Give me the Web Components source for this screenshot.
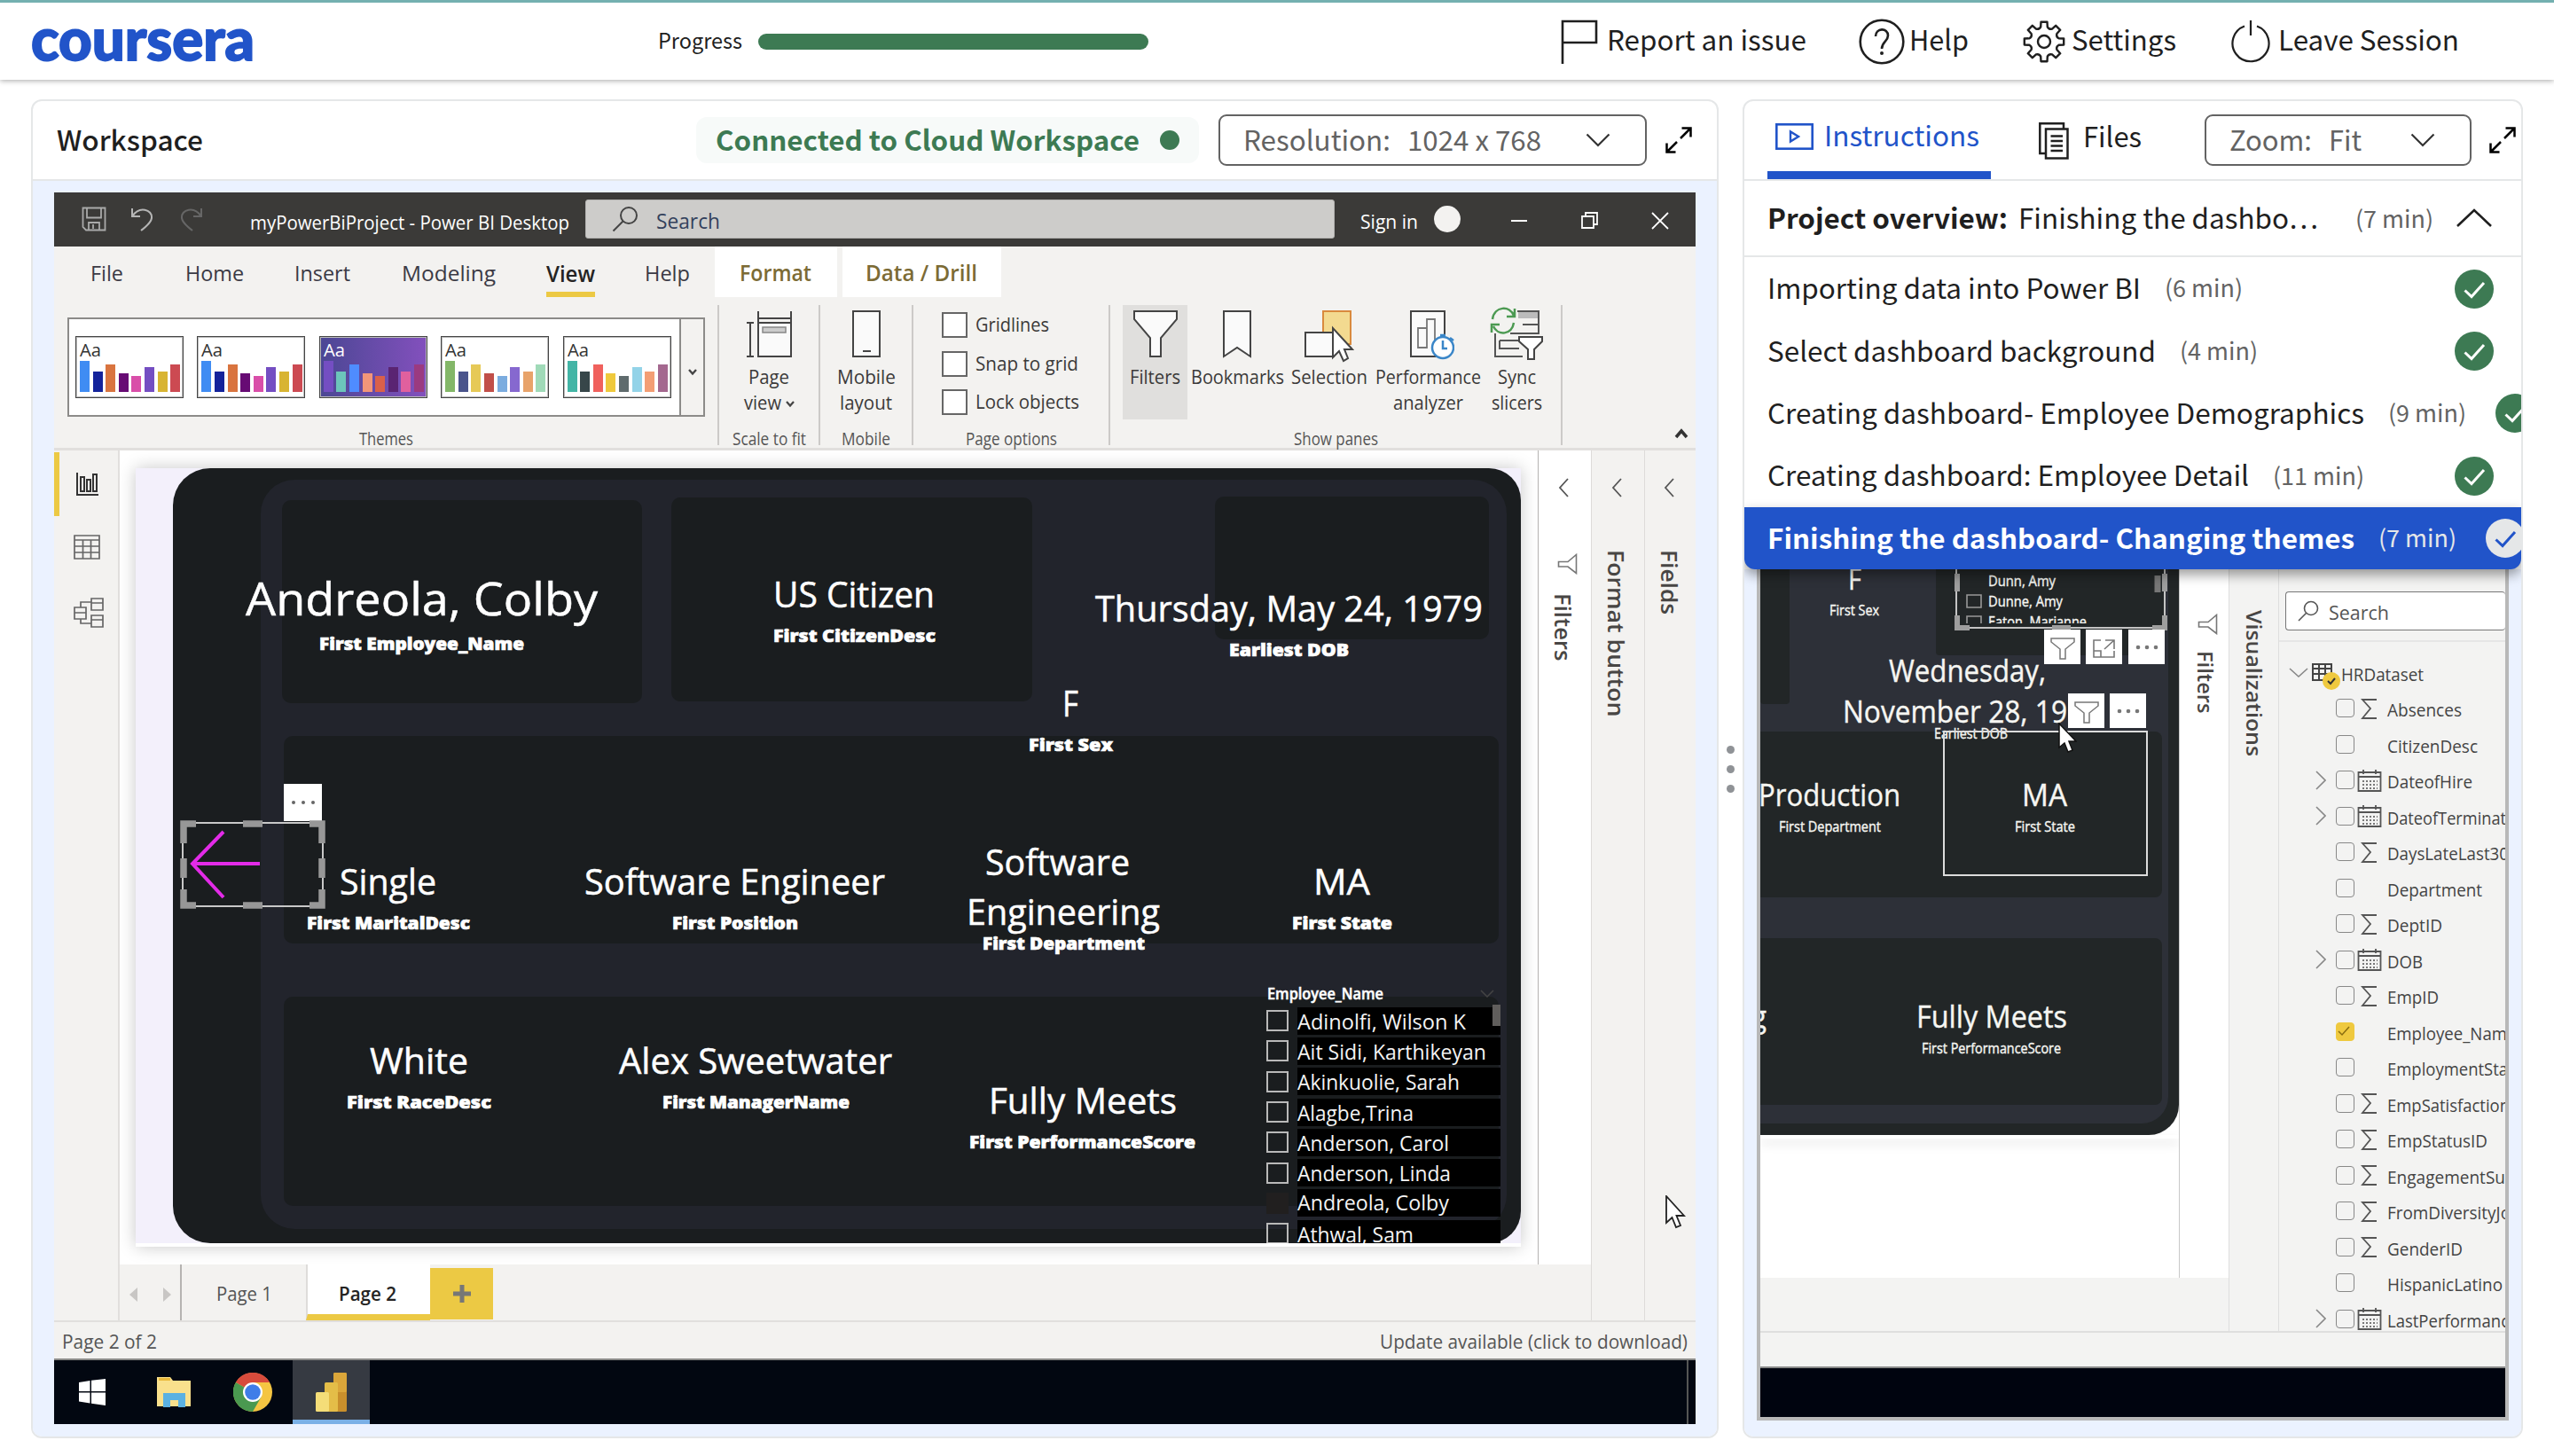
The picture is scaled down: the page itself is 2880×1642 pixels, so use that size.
<!DOCTYPE html>
<html lang="en">
<head>
<meta charset="utf-8">
<title>Coursera Guided Project</title>
<style>
html,body{margin:0;padding:0;background:#fff;width:2880px;height:1642px;overflow:hidden}
body{font-family:"Noto Sans CJK SC","Noto Sans",sans-serif;color:#1f1f1f}
</style>
</head>
<body>
<lab-app></lab-app>
<script>
/* ---- helpers ---- */
const T=(text,w,size,o='')=>`<fit-text w="${w}" style="font-size:${size}px;${o}">${text}</fit-text>`;
// canvas label: left edge, baseline, width
const L=(text,x,b,w,size,o='')=>T(text,w,size,`position:absolute;height:0;left:${x}px;top:${b-size*.357}px;${o}`);
const S=(w,h,body,o='')=>`<svg width="${w}" height="${h}" viewBox="0 0 ${w} ${h}" fill="none" style="display:block;flex:none;${o}">${body}</svg>`;
const box=(x,y,x2,y2,c,r=0,o='')=>`<i class="b" style="left:${x}px;top:${y}px;width:${x2-x}px;height:${y2-y}px;background:${c};border-radius:${r}px;${o}"></i>`;
const define=(name,html,css='')=>customElements.define(name,class extends HTMLElement{
  constructor(){super();this.attachShadow({mode:'open'});}
  connectedCallback(){
    if(this.shadowRoot.childNodes.length)return;
    this.shadowRoot.innerHTML=`<style>*{box-sizing:border-box}:host{display:block;box-sizing:border-box}.row{display:flex;align-items:center}.col{display:flex;flex-direction:column}.b{position:absolute;display:block}${css}</style>`+(typeof html==='function'?html(this):html);
  }
});

/* text run condensed or widened to an exact measure */
customElements.define('fit-text',class extends HTMLElement{
  constructor(){super();this.attachShadow({mode:'open'});
    this.shadowRoot.innerHTML=`<style>:host{display:block;flex:none;line-height:1;white-space:nowrap;box-sizing:border-box}
    :host([v]){writing-mode:vertical-rl}span{display:inline-block;line-height:inherit;transform-origin:0 50%;vertical-align:top}:host([v]) span{transform-origin:50% 0}</style><span><slot></slot></span>`;}
  connectedCallback(){
    const s=this.shadowRoot.querySelector('span'),w=+this.getAttribute('w'),v=this.hasAttribute('v');
    if(this.style.position==='absolute'&&!v)this.style.lineHeight='0';
    const cjk=getComputedStyle(this).fontFamily.includes('CJK');
    const n=v?s.offsetHeight:s.getBoundingClientRect().width;
    const k=w?w/n:.95;
    if(v){this.style.height=(w||n*k)+'px';s.style.transform=`scaleY(${k})`;}
    else{this.style.width=(w||n*k)+'px';s.style.transform=`translateY(${cjk?-.08:-.02}em) scaleX(${k})`;}
  }
});

/* ---- icons ---- */
const gear=(()=>{let d='';for(let i=0;i<8;i++){const p=(r,a)=>{const t=(i*45+a-90)*Math.PI/180;return (24+r*Math.cos(t)).toFixed(1)+' '+(24+r*Math.sin(t)).toFixed(1)};
  d+=(i?'L':'M')+p(17,-13)+'L'+p(22.5,-9)+'L'+p(22.5,9)+'L'+p(17,13)+'Q'+p(14.5,22.5)+' '+p(17,32);}return d+'Z'})();
const I={
 flag:S(42,52,'<path d="M2 51V3H40V27H2" stroke="#1f1f1f" stroke-width="2.6"/>'),
 help:S(52,52,'<circle cx="26" cy="26" r="24.3" stroke="#1f1f1f" stroke-width="2.6"/><path d="M19 20c0-10 14-10 14-1 0 7-7 7-7 15" stroke="#1f1f1f" stroke-width="2.6"/><circle cx="26" cy="39" r="2" fill="#1f1f1f"/>'),
 gear:S(48,48,`<path d="${gear}" stroke="#1f1f1f" stroke-width="2.4" stroke-linejoin="round"/><circle cx="24" cy="24" r="7" stroke="#1f1f1f" stroke-width="2.4"/>`),
 power:S(44,52,'<path d="M15 8.500A20.500 20.500 0 1 0 29 8.500M22 2V19" stroke="#1f1f1f" stroke-width="2.2"/>'),
 down:S(28,16,'<path d="M1.500 1.500 14 14 26.500 1.500" stroke="#333" stroke-width="2.2"/>'),
 up:S(42,22,'<path d="M2 20 21 2 40 20" stroke="#1f1f1f" stroke-width="2.6"/>'),
 expand:S(30,30,'<path d="M17 13 28 2M18.500 1.500H28.500V11.500M13 17 2 28M1.500 18.500V28.500H11.500" stroke="#000" stroke-width="2.5"/>'),
 play:S(43,30,'<rect x="1.300" y="1.300" width="40.400" height="27.400" stroke="#2154c9" stroke-width="2.600"/><path d="M17 9.500V20.500L26 15Z" stroke="#2154c9" stroke-width="2.400"/>'),
 files:S(34,42,'<path d="M8 35H1.300V1.300H28V7.500" stroke="#1f1f1f" stroke-width="2.5"/><rect x="8" y="7.500" width="24.500" height="33" stroke="#1f1f1f" stroke-width="2.5"/><path d="M13.500 15.500H27M13.500 21H27M13.500 26.500H27M13.500 32H27" stroke="#1f1f1f" stroke-width="2.3"/>'),
 lt:S(14,24,'<path d="M12 2 3 12 12 22" stroke="#555" stroke-width="1.8"/>'),
 vfun:S(23,24,'<path d="M21.500 1.500V22.500L12 15H1.500V9.500H12Z" stroke="#777" stroke-width="1.600"/>','margin-left:7px')
};
const ck=(c='#3d7a53',s='#fff')=>S(44,44,`<circle cx="22" cy="22" r="22" fill="${c}"/><path d="M11.500 23.500 19 30.500 33 15" stroke="${s}" stroke-width="3"/>`);

/* ---- top bar ---- */
define('app-header',`
<div class="row" style="height:100%;padding-left:35px">
 ${T('coursera',252,67,'font-family:Lato,sans-serif;font-weight:900;color:#2154c9;margin-top:-7px;-webkit-text-stroke:1.8px #2154c9')}
 ${T('Progress',95,24,'margin-left:455px')}
 <i style="width:440px;height:18px;border-radius:9px;background:#3d7a53;margin-left:18px"></i>
 <div class="row" style="margin-left:465px;color:#1f1f1f">
 ${I.flag}${T('Report an issue',225,31.500,'margin-left:10px')}
 <span style="margin-left:59px">${I.help}</span>${T('Help',67,31.500,'margin-left:5px')}
 <span style="margin-left:61px">${I.gear}</span>${T('Settings',118,31.500,'margin-left:7px')}
 <span style="margin-left:62px">${I.power}</span>${T('Leave Session',204,31.500,'margin-left:9px')}
 </div>
</div>`,`:host{height:90px;border-top:3px solid #74b0b0;background:#fff;box-shadow:0 1px 6px rgba(0,0,0,.35)}i{display:block;flex:none}`);

define('select-box',e=>`${T(e.getAttribute('label'),e.getAttribute('lw'),31)}${T(e.getAttribute('value'),e.getAttribute('vw'),31,'margin-left:19px')}<span style="margin-left:auto">${I.down}</span>`,
`:host{display:flex;align-items:center;height:58px;border:2.500px solid #636363;border-radius:9px;color:#636363;padding:0 39px 0 26px;flex:none}`);

/* ---- Power BI title bar ---- */
define('pbi-titlebar',`
 ${S(28,28,'<path d="M1.500 1.500H26.500V26.500H5L1.500 23Z M6 2V12.500H22V2 M8 26V18H20V26 M13 20V25" stroke="#aaa" stroke-width="1.800"/>','margin-left:31px')}
 ${S(28,28,'<path d="M2 2V11H11 M2.500 10.500C10-1 25 3 24 13 23 19 17 23 12 27" stroke="#b5b5b5" stroke-width="2"/>','margin-left:27px')}
 ${S(28,28,'<path d="M26 2V11H17 M25.500 10.500C18-1 3 3 4 13 5 19 11 23 16 27" stroke="#666" stroke-width="2"/>','margin-left:26px')}
 ${T('myPowerBiProject - Power BI Desktop',360,22,'margin-left:53px;color:#fff;margin-top:6px')}
 <div class="row s">${S(30,30,'<circle cx="19" cy="11" r="9" stroke="#444" stroke-width="2"/><path d="M12.500 17.500 1.500 28.500" stroke="#444" stroke-width="2"/>','margin-left:29px')}${T('Search',72,24,'margin-left:20px;color:#33415c;margin-top:3px')}</div>
 ${T('Sign in',65,22,'margin-left:29px;color:#fff;margin-top:3px')}
 <i></i>
 ${S(18,18,'<path d="M0 9H18" stroke="#fff" stroke-width="2"/>','margin-left:57px;margin-top:4px')}
 ${S(19,19,'<path d="M1 5H14V18H1ZM5 5V1H18V14H14" stroke="#fff" stroke-width="1.800"/>','margin-left:61px;margin-top:3px')}
 ${S(20,20,'<path d="M1 1 19 19M19 1 1 19" stroke="#fff" stroke-width="1.800"/>','margin-left:60px;margin-top:3px')}`,
`:host{display:flex;align-items:center;height:61px;background:#3b3a38;font-family:"Open Sans","Noto Sans",sans-serif;padding-bottom:1px}
.s{width:845px;height:44px;background:#cdccca;border:1px solid #b5b4b2;border-radius:3px;margin-left:18px;flex:none}
i{width:30px;height:30px;border-radius:50%;background:#f3f2f0;margin-left:18px;flex:none}`);

/* ---- ribbon tabs ---- */
define('pbi-tabs',`
 ${T('File',37,24.500,'margin-left:41px;margin-top:3px')}${T('Home',66,24.500,'margin-left:70px;margin-top:3px')}${T('Insert',63,24.500,'margin-left:57px;margin-top:3px')}${T('Modeling',106,24.500,'margin-left:58px;margin-top:3px')}
 <div class="v">${T('View',55,24.500,'font-weight:600')}<u></u></div>
 ${T('Help',51,24.500,'margin-left:56px;margin-top:3px')}
 <div class="w" style="width:138px;margin-left:28px;padding-right:1px">${T('Format',81,24.500)}</div><div class="w" style="width:179px;margin-left:6px;padding-right:1px">${T('Data / Drill',126,24.500)}</div>`,
`:host{display:flex;align-items:center;height:57px;color:#3b3a45}.v{height:57px;margin-left:57px;color:#252423;display:flex;flex-direction:column;padding-top:19px;justify-content:space-between}
u{display:block;height:6px;background:#ecc944}.w{height:57px;background:#fff;display:flex;align-items:center;justify-content:center;font-weight:600;color:#7c6b35;padding-top:3px}`);

define('theme-thumb',e=>{const c=e.getAttribute('colors').split(' '),h=[35,23,31,21,18,28,23,31];
 return `${T('Aa',24,20)}<div class="bars">${c.map((x,i)=>`<i style="background:${x};height:${h[i]}px"></i>`).join('')}</div>`},
`:host{width:122px;height:70px;border:1.500px solid #444;background:var(--bg,#fff);color:var(--fg,#333);padding:4px;display:flex;flex-direction:column;justify-content:space-between;flex:none;padding-top:5px;padding-bottom:6px;box-shadow:inset 0 0 0 1px #bbb}
.bars{display:flex;align-items:flex-end;gap:3.600px;height:35px}i{width:11px;display:block;flex:none}`);

define('ribbon-group',e=>`<div class="c"><slot></slot></div><div class="l">${T(e.getAttribute('label'),e.getAttribute('lw'),19.500)}</div>`,
`:host{height:158px;border-right:2px solid #cccac8;display:flex;flex-direction:column;flex:none}.c{height:138px;display:flex;flex:none}.l{display:flex;justify-content:center;height:20px;padding-top:3px;align-items:flex-start;color:#555;flex:none}`);

define('ribbon-button',e=>`<slot></slot><div class="t">${e.getAttribute('t').split('|').map(p=>{const[a,b,c]=p.split(':');return `<div class="row" style="gap:5px">${T(a,b,22.500)}${c?S(10,8,'<path d="M1 1 5 5.500 9 1" stroke="#444" stroke-width="2.200"/>','margin-top:4px'):''}</div>`}).join('')}</div>`,
`:host{display:flex;flex-direction:column;align-items:center;padding-top:6px;height:129px;flex:none;color:#3b3a39}::slotted(svg){height:60px}.t{margin-top:4px;display:flex;flex-direction:column;align-items:center;gap:6.500px}`);

const swirl=['#3f8cf3','#14239b','#d9743f','#670b74','#d94ea9','#744ec2','#d8b432','#cc4a52'].join(' ');
define('pbi-ribbon',`
<ribbon-group label="Themes" lw="61" style="width:750px"><div class="gal">
 <div class="th"><theme-thumb colors="${swirl}"></theme-thumb><theme-thumb colors="${swirl}"></theme-thumb>
 <theme-thumb style="--bg:linear-gradient(90deg,#4b4794,#8350bd);--fg:#fff" colors="#744ec2 #6cc5bb #4f8cff #f29679 #d9604a #5a2472 #e0609e #9b3a80"></theme-thumb>
 <theme-thumb colors="#83b768 #4a548c #e6c957 #c14f49 #7bacdf #8668cf #e8a36a #a0dab8"></theme-thumb>
 <theme-thumb colors="#43b5a6 #374649 #f0615d #efc93c #5f6b6d #93d3e8 #f39e74 #a4688f"></theme-thumb></div>
 <div class="dd">${S(10,8,'<path d="M1 1 5 5.500 9 1" stroke="#444" stroke-width="2.400"/>','margin-top:12px')}</div></div></ribbon-group>
<ribbon-group label="Scale to fit" lw="83" style="width:114px"><ribbon-button style="width:112px" t="Page:46|view:42:1">${S(52,60,'<path d="M14 1V18M51 1V18M14 9H51M1 14H9M1 52H9M5 14V52" stroke="#444" stroke-width="2"/><rect x="14" y="14" width="37" height="38" fill="#fafafa" stroke="#444" stroke-width="2"/><rect x="19" y="19" width="26" height="6" fill="#ccc" stroke="#888" stroke-width="1.500"/>')}</ribbon-button></ribbon-group>
<ribbon-group label="Mobile" lw="55" style="width:105px"><ribbon-button style="width:103px" t="Mobile:66|layout:59">${S(32,60,'<rect x="1" y="1" width="30" height="51" fill="#fafafa" stroke="#444" stroke-width="2"/><path d="M12 46H21" stroke="#444" stroke-width="2"/>')}</ribbon-button></ribbon-group>
<ribbon-group label="Page options" lw="103" style="width:222px"><div class="ck"><div><i></i>${T('Gridlines',83,22.500)}</div><div><i></i>${T('Snap to grid',116,22.500)}</div><div><i></i>${T('Lock objects',117,22.500)}</div></div></ribbon-group>
<ribbon-group label="Show panes" lw="95" style="width:510px"><div class="row" style="padding-left:14px;align-items:flex-start">
 <ribbon-button style="width:73px;background:#e0dfdd" t="Filters:57">${S(50,60,'<path d="M1 1H49V10L31 31V52H19V31L1 10Z" fill="#fafafa" stroke="#444" stroke-width="2"/>')}</ribbon-button>
 <ribbon-button style="width:113px" t="Bookmarks:105">${S(32,60,'<path d="M1 1H31V52L16 42 1 52Z" fill="#fafafa" stroke="#444" stroke-width="2"/>','margin-right:2px')}</ribbon-button>
 <ribbon-button style="width:94px" t="Selection:86">${S(56,60,'<rect x="21" y="1" width="31" height="37" fill="#f3da90" stroke="#d98a3d" stroke-width="2"/><rect x="1" y="25" width="32" height="27" fill="#fafafa" stroke="#444" stroke-width="2"/><path d="M32 20V53L39 46 44 57 49 54 45 44H54Z" fill="#fff" stroke="#444" stroke-width="2"/>')}</ribbon-button>
 <ribbon-button style="width:129px" t="Performance:119|analyzer:79">${S(50,60,'<rect x="1" y="1" width="38" height="51" fill="#fafafa" stroke="#444" stroke-width="2"/><path d="M9 42V20H19V42ZM19 42V10H28V42" stroke="#777" stroke-width="1.800"/><circle cx="37" cy="42" r="12" fill="#fff" stroke="#3a86c8" stroke-width="2.500"/><path d="M37 34V43H42M34 28H40M45 31 49 34" stroke="#3a86c8" stroke-width="2.500"/>','margin-left:8px')}</ribbon-button>
 <ribbon-button style="width:71px" t="Sync:43|slicers:57">${S(60,60,'<path d="M30 1H54V26M22 26H54V16H36M5 26V52H36M10 34H31M10 34V43H32" stroke="#555" stroke-width="2"/><rect x="31" y="2" width="22" height="7" fill="#bbb"/><path d="M32 30H58V35L49 44V55H42V44L32 35Z" fill="#fff" stroke="#444" stroke-width="2"/><path d="M2 10C4-5 22-6 26 6M27-2V7H18M26 14C24 28 8 29 3 18M1 25V16H10" stroke="#4c9a52" stroke-width="2.500"/>','overflow:visible')}</ribbon-button></div>
</ribbon-group>
${S(16,12,'<path d="M2 10 8 3 14 10" stroke="#333" stroke-width="3.500"/>','margin:139px 8px 0 auto')}`,
`:host{display:flex;height:173px;padding-top:9px;border-bottom:3px solid #e1dfdd}
.gal{margin:14px 0 0 15px;width:719px;height:112px;border:2px solid #8c8b89;background:#fff;display:flex}
.th{display:flex;align-items:center;gap:15.400px;padding-left:7px;width:688px;padding-bottom:1px}.dd{flex:1;background:#f3f2f0;border-left:2px solid #8c8b89;display:flex;align-items:center;justify-content:center}
.ck{display:flex;flex-direction:column;gap:14.500px;padding:8px 0 0 32px;color:#3b3a39}.ck div{display:flex;align-items:center;gap:9px;height:29px}.ck i{width:29px;height:29px;border:2px solid #666;background:#fff;display:block}`);

/* ---- report canvas ---- */
const W='color:#fff;-webkit-text-stroke:.5px #fff;',K='font-weight:800;color:#fff;-webkit-text-stroke:.7px #fff;',D='#1a1d1f';
const names=[['Adinolfi, Wilson K',190],['Ait Sidi, Karthikeyan',213],['Akinkuolie, Sarah',183],['Alagbe,Trina',131],['Anderson, Carol',171],['Anderson, Linda',173],['Andreola, Colby',171],['Athwal, Sam',131]];
const kpi=(t,x,b,w,s,t2,x2,b2,w2)=>L(t,x-153,b-528,w,s,W)+L(t2,x2-153,b2-527.5,w2,19.500,K);
const card=(x,y,x2,y2)=>box(x-153,y-528,x2-153,y2-528,D,10);
define('report-page',`
 ${box(42,0,1562,874,D,0,'border-radius:42px 36px 36px 42px')}
 ${box(141,13,1546,858,'#22242c',38)}
 ${card(318,564,724,793)}${card(757,561,1164,791)}${card(1370,560,1679,721)}${card(320,830,1690,1064)}${card(320,1124,1690,1360)}
 ${kpi('Andreola, Colby',277,694,397,52,'First Employee_Name',360,732,231)}
 ${kpi('US Citizen',872,685,182,39.500,'First CitizenDesc',872,723,183)}
 ${kpi('Thursday, May 24, 1979',1235,701,437,39.500,'Earliest DOB',1386,739,135)}
 ${kpi('F',1198,808,18,39.500,'First Sex',1160,846,95)}
 ${kpi('Single',383,1009,109,39.500,'First MaritalDesc',346,1047,184)}
 ${kpi('Software Engineer',659,1009,339,39.500,'First Position',758,1047,142)}
 ${L('Software',958,459,163,39.500,W)}
 ${kpi('Engineering',1090,1043,218,39.500,'First Department',1108,1070,183)}
 ${kpi('MA',1481,1009,64,39.500,'First State',1457,1047,113)}
 ${kpi('White',417,1211,111,39.500,'First RaceDesc',391,1249,163)}
 ${kpi('Alex Sweetwater',698,1211,308,39.500,'First ManagerName',747,1249,211)}
 ${kpi('Fully Meets',1115,1256,212,39.500,'First PerformanceScore',1093,1294,255)}
 ${L('Employee_Name',1276,598,131,18,W+'font-weight:600')}
 <div class="list">${names.map((n,i)=>`<div><i class="${i==6?'on':''}"></i><p>${T(n[0],n[1],23.500,i==6?'margin-top:-3px':'')}</p></div>`).join('')}</div>
 ${box(1530,605,1539,629,'#605e5c')}
 ${S(16,9,'<path d="M1 1 8 8 15 1" stroke="#444" stroke-width="1.500"/>','position:absolute;left:1516px;top:588px')}
 <div class="more"><i></i><i></i><i></i></div>
 ${S(166,102,`<rect x="4" y="4" width="158" height="94" stroke="#c8c8c8" stroke-width="2"/><path d="M50 14 15 50 50 88M15 50H91" stroke="#e32be8" stroke-width="4"/>
 <path d="M5 27V5H19M72 5H94M147 5H161V27M161 44V66M161 79V97H147M94 97H72M19 97H5V79M5 66V44" stroke="#979797" stroke-width="7.500"/>`,'position:absolute;left:49px;top:396px')}`,
`:host{position:relative;width:1562px;height:878px;background:#f3f0fb;border-bottom:4px solid #fff;box-shadow:0 0 18px rgba(0,0,0,.22);overflow:visible}
.list{position:absolute;left:1275px;top:606px;height:268px;width:264px;overflow:hidden;color:#f4f4f4}.list div{display:flex;height:34.300px;align-items:center;gap:10px}.list i{width:25px;height:24px;border:2px solid #b9b9b9;display:block}.list i.on{border:0;background:#211f1f}
.list p{margin:0;flex:1;background:#000;height:31px;display:flex;align-items:center;padding-top:3px}
.more{position:absolute;left:167px;top:356px;width:43px;height:42px;background:#fff;display:flex;align-items:center;justify-content:center;gap:7px}.more i{width:4px;height:4px;border-radius:2px;background:#666}`);

const rail=[S(27,28,'<path d="M2 1V26H26M6 22V6H10V22ZM13 22V9H17V22ZM20 22V3H24V22Z" stroke="#333" stroke-width="2"/>'),
 S(30,28,'<path d="M1 1H29V27H1ZM1 6H29M1 13H29M1 20H29M10.500 6V27M19.500 6V27" stroke="#666" stroke-width="1.700"/>'),
 S(34,34,'<path d="M1 11H14V24H1ZM1 17H14M20 1H33V14H20ZM20 6H33M20 20H33V33H20ZM20 25H33M8 11V5H20M8 24V29H20" stroke="#666" stroke-width="1.700"/>')];
define('side-pane',e=>`<div style="padding-top:30px;margin-right:3px">${I.lt}</div><slot></slot><div style="margin:${e.getAttribute('gap')}px 2px 0 0"><fit-text v w="${e.getAttribute('tw')}" style="font-size:26px;font-weight:600">${e.getAttribute('label')}</fit-text></div>`,
`:host{width:60px;border-left:1.500px solid #dddbd9;display:flex;flex-direction:column;align-items:center;color:#484644;flex:none}`);

define('pbi-body',`
<nav><div class="on">${rail[0]}</div><div style="height:69px">${rail[1]}</div><div style="height:79px">${rail[2]}</div></nav>
<section><div class="row" style="height:918px;align-items:stretch;background:#fff"><div class="cv"><report-page></report-page></div>
<side-pane label="Filters" tw="77" gap="21" style="background:#fff;border-color:#b5b3b1">${S(23,24,'<path d="M21.500 1.500V22.500L12 15H1.500V9.500H12Z" stroke="#777" stroke-width="1.600"/>','margin:62px 0 0 6px')}</side-pane></div>
<div class="pg"><div class="ar">${S(9,16,'<path d="M9 0V16L0 8Z" fill="#c8c6c4"/>')}${S(9,16,'<path d="M0 0V16L9 8Z" fill="#c8c6c4"/>')}</div>
<div class="tab">${T('Page 1',63,21.500)}</div><div class="tab a">${T('Page 2',65,21.500,'font-weight:600;color:#252423')}</div><div class="add">${S(20,20,'<path d="M10 0V20M0 10H20" stroke="#777" stroke-width="5"/>')}</div></div></section>
<side-pane label="Format button" tw="189" gap="58"></side-pane><side-pane label="Fields" tw="73" gap="58" style="width:59px"></side-pane>`,
`:host{display:flex;height:981px}nav{width:74px;border-right:2px solid #e1dfdd;flex:none}nav div{height:72px;display:flex;align-items:center;padding-left:22px}nav .on{border-left:6px solid #ecc944;padding-left:18px;margin-top:2px}
section{width:1658.500px;flex:none}.cv{width:1598.500px;padding:20px 0 0 18px}.pg{height:63px;display:flex}.ar{width:70px;border-right:2px solid #b5b3b1;display:flex;align-items:center;justify-content:space-between;padding:4px 10px 0 11px}
.tab{width:140px;display:flex;align-items:center;justify-content:center;color:#555;padding-top:3px}.tab.a{background:#fff;border-bottom:7px solid #ecc944;border-left:2px solid #dedcda;padding-top:9px;padding-right:4px}.add{width:71px;margin:4px 0 1px;background:#ecc944;display:flex;align-items:center;justify-content:center}`);

define('task-bar',`
${S(30,30,'<path d="M0 4 12.500 2V14H0ZM14 1.800 30 0V14H14ZM0 15.500H12.500V27.500L0 25.500ZM14 15.500H30V30L14 27.800Z" fill="#fff"/>','margin-left:28px')}
${S(40,34,'<path d="M1 0H16L19 4H39V33H1Z" fill="#f9e08c"/><rect x="3" y="1" width="13" height="3" fill="#e9b93c"/><path d="M8 18H33V34H25V26H16V34H8Z" fill="#5bb1e2"/>','margin-left:57px')}
${S(44,44,'<circle cx="22" cy="22" r="22" fill="#f5c542"/><path d="M22 22 2.900 11A22 22 0 0 1 41.100 11H22Z" fill="#d84b3c"/><path d="M22 22 2.900 11A22 22 0 0 0 22 44L31.500 27.500Z" fill="#4a9950"/><circle cx="22" cy="22" r="11" fill="#fff"/><circle cx="22" cy="22" r="8.800" fill="#3f7de8"/>','margin-left:47px')}
<div class="p">${S(36,44,'<rect x="20" y="0" width="15" height="44" rx="1.500" fill="#c98f2c"/><rect x="20" y="0" width="15" height="22" rx="1.500" fill="#dba63a"/><rect x="10" y="11" width="15" height="33" rx="1.500" fill="#e4bd48"/><rect x="0" y="22" width="15" height="22" rx="1.500" fill="#f4dd78"/>')}</div><b></b>`,
`:host{display:flex;align-items:center;height:74px;background:#020711;border-top:2px solid #8a8a88}.p{margin-left:23px;width:87px;height:100%;background:#363a42;border-bottom:5px solid #7ab0e6;display:flex;align-items:center;justify-content:center;padding-top:4px}b{width:2px;height:72px;background:#555;margin:0 8px 0 auto}`);

define('power-bi',`<pbi-titlebar></pbi-titlebar><pbi-tabs></pbi-tabs><pbi-ribbon></pbi-ribbon><pbi-body></pbi-body>
<div class="st">${T('Page 2 of 2',107,21.500)}${T('Update available (click to download)',347,21.500)}</div><task-bar></task-bar>
${S(26,38,'<path d="M2 1V31L8.500 25 13 36 18 34 13.500 23H22Z" fill="#fff" stroke="#222" stroke-width="1.800"/>','position:absolute;left:1816px;top:1131px')}`,
`:host{position:relative;width:1851px;height:1389px;background:#f3f2f0;font-family:"Open Sans","Noto Sans",sans-serif;overflow:hidden}.st{height:43px;border-top:2px solid #e1dfdd;display:flex;justify-content:space-between;align-items:center;padding:3px 9px 0 9px;color:#555}`);

define('workspace-panel',`<div class="h">${T('Workspace',165,31,'font-weight:500')}
<div class="c">${T('Connected to Cloud Workspace',478,31,'font-weight:700')}<i></i></div>
<select-box label="Resolution:" lw="166" value="1024 x 768" vw="151" style="width:483px;margin-left:22px"></select-box><span style="margin-left:21px">${I.expand}</span></div>
<div class="m"><power-bi></power-bi></div>`,
`:host{width:1903px;height:1510px;border:2px solid #e5e7e8;border-radius:12px;overflow:hidden;flex:none}.h{height:90px;border-bottom:2px solid #e5e7e8;display:flex;align-items:center;padding-left:27px}
.c{width:567px;height:52px;border-radius:12px;background:#f7faf9;margin-left:556px;display:flex;align-items:center;justify-content:space-between;padding:0 22px 0 22px;color:#3d7a53}.c i{width:22px;height:22px;border-radius:50%;background:#3d7a53}
.m{background:#ebf2ff;height:1420px;padding:13px 0 0 24px}`);

/* ---- lesson list ---- */
define('lesson-row',e=>{const on=e.hasAttribute('active');return T(e.getAttribute('t'),e.getAttribute('w'),31,on?'font-weight:700':'')+T(e.getAttribute('m'),e.getAttribute('mw'),26.500,`margin:2px 0 0 27px;color:${on?'#e5e7e8':'#636363'}`)+`<span>${on?ck('#e5e7e8','#2154c9'):ck()}</span>`},
`:host{display:flex;align-items:center;height:70.400px;padding:1px 31px 0 26px;overflow:hidden}:host([active]){background:#2154c9;color:#fff;border-radius:0 0 12px 12px;box-shadow:0 6px 14px rgba(0,0,0,.4);height:70px}span{margin-left:auto;padding-left:33px;flex:none}`);

/* ---- tutorial video ---- */
const V='font-weight:500;color:#f6f6f2;-webkit-text-stroke:.4px #f6f6f2;',vx=x=>x-1985,vy=y=>y-642;
const vl=(t,x,b,w,s)=>L(t,vx(x),vy(b)+1,w,s,V);
const vb=(x,y,x2,y2,c,r,o)=>box(vx(x),vy(y),vx(x2),vy(y2),c,r,o);
const fun='<path d="M8 10H34V14L24 22V33H18V22L8 14Z" stroke="#777" stroke-width="1.500"/>',dots='<circle cx="11" cy="20" r="2.300" fill="#777"/><circle cx="21" cy="20" r="2.300" fill="#777"/><circle cx="31" cy="20" r="2.300" fill="#777"/>';
const btn=(x,y,b)=>S(41,39,'<rect width="41" height="39" fill="#fff"/>'+b,`position:absolute;left:${vx(x)}px;top:${vy(y)}px`);
const VD='#222627';
define('video-canvas',`
 ${vb(1985,600,2457,1280,VD,0,'border-radius:0 0 34px 0')}${vb(1985,600,2445,1267,'#2d3038',0,'border-radius:0 0 30px 0')}
 ${vb(1985,600,2018,794,VD,4)}${vb(2183,600,2440,739,VD,4)}${vb(1985,825,2438,1012,VD,0,'border-radius:0 8px 8px 0')}${vb(1985,1058,2438,1246,VD,0,'border-radius:0 8px 8px 0')}
 ${vb(1985,1280,2457,1284,'#fff',0,'box-shadow:0 6px 12px rgba(0,0,0,.13)')}
 ${vl('F',2084,665,15,33)}${vl('First Sex',2063,693,56,15.500)}
 ${vl('Dunn, Amy',2242,661,76,17)}${vl('Dunne, Amy',2242,683.500,84,17)}
 <div class="clip">${T('Eaton, Marianne',111,17,V)}</div>
 ${S(250,76,'<path d="M21 29H37V43H21ZM21 61V53H37V61" stroke="#999" stroke-width="1.600"/><path d="M9 0V66H244V0" stroke="#c4c4c4" stroke-width="2"/><path d="M10 5V25M10 52V66H24M117 66H138M230 66H244V52M244 5V25" stroke="#9e9e9e" stroke-width="6"/><path d="M236 7V26" stroke="#777" stroke-width="7"/>','position:absolute;left:212px;top:0')}
 ${btn(2305,710,fun)}${btn(2352,710,'<path d="M17 12H9V31H32V24M9 24H17V31M22 12H32V22M32 12 21 22" stroke="#777" stroke-width="1.600"/>')}${btn(2400,710,dots)}
 ${vl('Wednesday,',2130,769,177,34)}${vl('November 28, 19',2078,815,253,34)}
 ${vl('Earliest DOB',2181,832,83,15.500)}
 ${vb(2191,824,2422,988,'none',0,'border:2px solid #dcdcdc')}
 ${btn(2332,782,fun)}${btn(2379,782,dots)}
 ${vl('Production',1983,909,160,34)}${vl('First Department',2006,937,115,15.500)}${vl('MA',2280,909,51,34)}${vl('First State',2272,937,68,15.500)}
 ${vl('g',1975,1159,17,34)}${vl('Fully Meets',2161,1159,170,34)}${vl('First PerformanceScore',2167,1187,157,15.500)}
 ${S(22,34,'<path d="M2 1V28L8 23 12 33 17 31 13 21H21Z" fill="#fff" stroke="#111" stroke-width="1.500"/>','position:absolute;left:335px;top:173px')}`,
`:host{position:relative;width:472px;height:799px;background:#fff;overflow:hidden;flex:none}.clip{position:absolute;left:257px;top:50px;height:11px;width:120px;overflow:hidden}.b{z-index:0}`);

const cal=S(28,26,'<path d="M1.500 4H26.500V25H1.500ZM1.500 9H26.500M7 1V6M21 1V6" stroke="#555" stroke-width="1.800"/><path d="M6 14H23M6 18H23M6 22H23" stroke="#777" stroke-width="1.800" stroke-dasharray="2 2"/>'),
 sig=S(28,26,'<path d="M22 3H6L15 13 6 24H22" stroke="#555" stroke-width="1.800"/>');
define('field-row',e=>{const k=e.getAttribute('k');return `<span class="a">${k=='c'?S(12,22,'<path d="M1 1 11 11 1 21" stroke="#888" stroke-width="1.600"/>'):''}</span><i>${k=='y'?S(17,17,'<path d="M2 9 6 13 14 4" stroke="#8a6d10" stroke-width="1.500"/>'):''}</i><span class="k">${k=='c'?cal:k=='s'?sig:''}</span>${T(e.getAttribute('t'),e.getAttribute('w'),20.500,'margin-top:3px')}`},
`:host{display:flex;align-items:center;height:40.500px;padding-left:41px;color:#444}.a{width:23px;flex:none}i{width:21px;height:21px;border:1.600px solid #888;border-radius:4px;flex:none}:host([k=y]) i{background:#efc93f;border-color:#efc93f}.k{width:28px;margin:0 6px 0 3px;flex:none}`);
const F=[['Absences',84,'s'],['CitizenDesc',102,''],['DateofHire',96,'c'],['DateofTerminat',134,'c'],['DaysLateLast30',137,'s'],['Department',107,''],['DeptID',62,'s'],['DOB',40,'c'],['EmpID',58,'s'],['Employee_Nam',135,'y'],['EmploymentSta',136,''],['EmpSatisfaction',138,'s'],['EmpStatusID',113,'s'],['EngagementSu',133,'s'],['FromDiversityJo',139,'s'],['GenderID',85,'s'],['HispanicLatino',130,''],['LastPerformanc',137,'c']];
define('video-frame',`
<div class="top"><div class="l"><div class="row" style="height:799px;background:#fff;align-items:stretch"><video-canvas></video-canvas>
<div class="vp">${I.vfun}<fit-text v w="71" style="font-size:24px;font-weight:600;margin:18px 0 0 2px">Filters</fit-text></div></div></div>
<div class="vp g" style="padding-top:46px"><fit-text v w="165" style="font-size:24px;font-weight:600">Visualizations</fit-text></div>
<div class="f"><div class="se">${S(24,24,'<circle cx="15" cy="9" r="7.500" stroke="#555" stroke-width="1.600"/><path d="M9.500 14.500 1 23" stroke="#555" stroke-width="1.600"/>')}${T('Search',68,22.500,'margin:5px 0 0 11px')}</div><hr>
<div class="row" style="height:38px;padding:0 0 0 11px;margin-top:16px">${S(22,12,'<path d="M1 1 11 10 21 1" stroke="#888" stroke-width="1.600"/>')}${S(34,32,'<path d="M1 2H22V20H1ZM1 7H22M1 13H22M8 2V20M15 2V20" stroke="#444" stroke-width="2"/><circle cx="22" cy="21" r="10" fill="#efc93f"/><path d="M18 21 21 24 26 18" stroke="#333" stroke-width="2"/>','margin:8px 0 0 4px')}${T('HRDataset',93,20.500,'margin:3px 0 0 -1px;color:#444')}</div>
<div style="margin-top:1px">${F.map(f=>`<field-row t="${f[0]}" w="${f[1]}" k="${f[2]}"></field-row>`).join('')}</div></div></div>
<div class="s"></div><div class="t"></div>`,
`:host{width:848px;border:4px solid #b8b8b8;border-top:0;background:#f3f3f2;font-family:"Open Sans","Noto Sans",sans-serif;height:960px;overflow:hidden}
.top{height:859px;display:flex;overflow:hidden}.l{width:528px;flex:none}.vp{width:56px;flex:none;border-left:1.500px solid #c8c8c8;display:flex;flex-direction:column;align-items:center;padding-top:50px;color:#484644}.g{border-color:#dedede}
.f{width:256px;border-left:1.500px solid #dedede;flex:none;overflow:hidden}.se{margin:25px 0 0 7px;height:44px;border:1.600px solid #777;border-radius:4px;border-right:0;background:#fff;display:flex;align-items:center;padding-left:13px;color:#555}hr{margin:11px 0 0;border:0;border-top:2px solid #e6e6e6}
.s{height:40px;border-top:2px solid #dedede}.t{height:60px;border-top:2px solid #888;background:#00040f}`);

define('lesson-panel',`
<div class="h"><div class="tab"><div class="row">${I.play}${T('Instructions',175,31,'margin-left:12px')}</div></div>
<span style="margin:1px 0 0 54px">${I.files}</span>${T('Files',66,31,'margin:-7px 0 0 16px;color:#1f1f1f')}
<select-box label="Zoom:" lw="93" value="Fit" vw="37" style="width:301px;margin-left:71px"></select-box><span style="margin-left:20px">${I.expand}</span></div>
<div class="o">${T('Project overview:',271,31,'font-weight:700')}${T('Finishing the dashbo…',338,31,'margin-left:12px')}${T('(7 min)',88,26.500,'margin:4px 0 0 42px;color:#636363')}<span style="margin-left:25px">${I.up}</span></div>
<div class="ls"><lesson-row t="Importing data into Power BI" w="421" m="(6 min)" mw="88"></lesson-row>
<lesson-row t="Select dashboard background" w="438" m="(4 min)" mw="88"></lesson-row>
<lesson-row t="Creating dashboard- Employee Demographics" w="673" m="(9 min)" mw="88"></lesson-row>
<lesson-row t="Creating dashboard: Employee Detail" w="543" m="(11 min)" mw="103"></lesson-row>
<lesson-row active t="Finishing the dashboard- Changing themes" w="662" m="(7 min)" mw="88"></lesson-row></div>
<div class="m"><video-frame></video-frame></div>`,
`:host{width:880px;height:1510px;border:2px solid #e5e7e8;border-radius:12px;overflow:hidden;color:#1f1f1f;flex:none}.h{height:90px;border-bottom:2px solid #e5e7e8;display:flex;align-items:center;padding-left:26px}
.tab{width:252px;height:88px;border-bottom:9px solid #2154c9;color:#2154c9;padding:0 0 0 9px;display:flex;align-items:center;flex:none}
.o{height:86px;border-bottom:2px solid #e5e7e8;display:flex;align-items:center;padding-left:26px}.ls{position:relative;z-index:1;background:#fff;border-radius:0 0 12px 12px}
.m{background:#ebf2ff;height:1000px;padding-left:14px}`);

define('lab-app',`<app-header></app-header><main><workspace-panel></workspace-panel><div class="d"><i></i><i></i><i></i></div><lesson-panel></lesson-panel></main>`,
`:host{width:2880px;height:1642px;background:#fff}main{display:flex;padding:22px 0 0 35px}.d{width:27px;height:1510px;flex:none;display:flex;flex-direction:column;align-items:center;justify-content:center;gap:13px}.d i{width:9px;height:9px;border-radius:50%;background:#8f9296}`);
</script>
</body>
</html>
